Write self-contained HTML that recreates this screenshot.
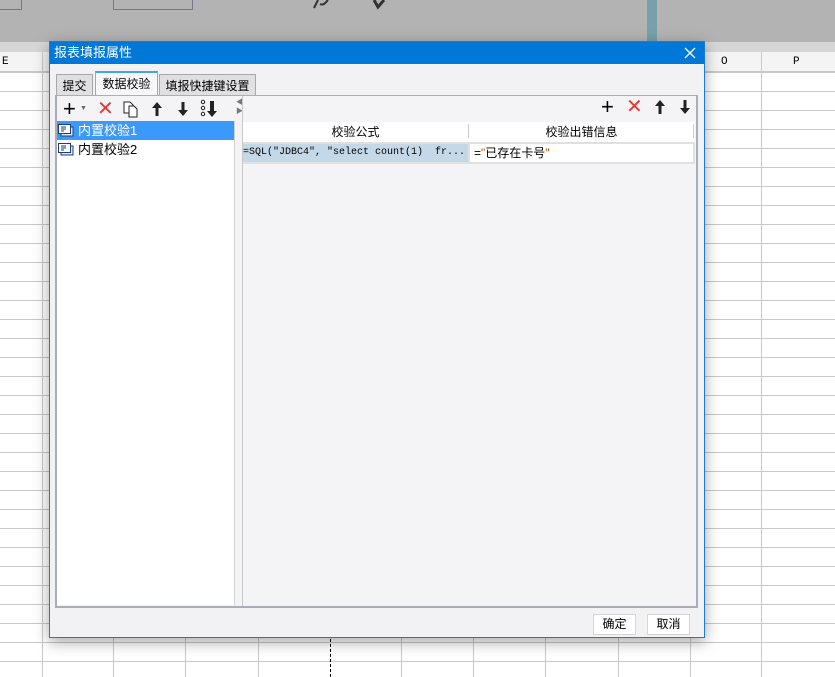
<!DOCTYPE html>
<html><head><meta charset="utf-8"><style>
*{margin:0;padding:0;box-sizing:border-box}
body{width:835px;height:677px;position:relative;overflow:hidden;background:#fff;font-family:"Liberation Sans","Noto Sans CJK SC",sans-serif;font-size:12px;color:#000}
.abs{position:absolute}
.grid{left:0;top:72px;width:835px;height:605px;
background-image:linear-gradient(#c8c8c8 1px,transparent 1px);background-size:100% 19px}
.vl{position:absolute;top:52px;width:1px;height:625px;background:#c8c8c8}
.mono{font-family:"Liberation Mono","Noto Sans CJK SC",monospace}
</style></head><body>
<div class="abs" style="left:0;top:0;width:835px;height:42px;background:#b3b3b3"></div>
<div class="abs" style="left:0;top:0;width:22px;height:10px;border:1px solid #6d7a90;border-top:none;border-left:none"></div>
<div class="abs" style="left:113px;top:0;width:80px;height:10px;border:1px solid #6d7a90;border-top:none"></div>
<div class="abs" style="left:647px;top:0;width:10px;height:42px;background:#76a1ab"></div>
<svg class="abs" style="left:310px;top:0" width="80" height="12"><path d="M4 8 L8 0 M10 4 C14 6 16 2 18 0" stroke="#333" stroke-width="2" fill="none"/><path d="M64 0 L68 7 L74 0" stroke="#333" stroke-width="3" fill="none"/></svg>
<div class="abs" style="left:0;top:42px;width:835px;height:10px;background:#d6d6d6"></div>
<div class="abs" style="left:0;top:52px;width:835px;height:20px;background:#f4f4f4;border-bottom:1px solid #c8c8c8"></div>
<div class="abs grid"></div>
<div class="vl" style="left:42px"></div><div class="vl" style="left:113px"></div><div class="vl" style="left:185px"></div><div class="vl" style="left:258px"></div>
<div class="abs" style="left:330px;top:52px;height:625px;border-left:1px dashed #000"></div>
<div class="vl" style="left:401px"></div><div class="vl" style="left:473px"></div><div class="vl" style="left:545px"></div><div class="vl" style="left:618px"></div><div class="vl" style="left:690px"></div><div class="vl" style="left:761px"></div>
<div class="abs mono" style="left:2px;top:56px;font-size:11px">E</div>
<div class="abs mono" style="left:721px;top:56px;font-size:11px">O</div>
<div class="abs mono" style="left:793px;top:56px;font-size:11px">P</div>

<div class="abs" style="left:49px;top:41px;width:656px;height:597px;background:#f2f2f4;border:1px solid #1a7ad4;box-shadow:0 4px 14px rgba(0,0,0,.35)">
 <div style="height:22px;background:#0078d7;color:#fff;font-size:13px;line-height:22px;padding-left:4px">报表填报属性</div>
 <svg class="abs" style="left:634px;top:5px" width="12" height="12"><path d="M1 1L11 11M11 1L1 11" stroke="#fff" stroke-width="1.3"/></svg>
 <div class="abs" style="left:6px;top:32px;width:37px;height:22px;background:#e0e0e2;border:1px solid #a8a8a8;border-bottom:none;font-size:12px;text-align:center;line-height:22px">提交</div>
 <div class="abs" style="left:45px;top:29px;width:63px;height:25px;background:#f7f7f9;border:1px solid #a8a8a8;border-top:2px solid #4aa0e8;border-bottom:none;font-size:12px;text-align:center;line-height:22px">数据校验</div>
 <div class="abs" style="left:109px;top:32px;width:97px;height:22px;background:#e0e0e2;border:1px solid #a8a8a8;border-bottom:none;font-size:12px;text-align:center;line-height:22px">填报快捷键设置</div>
 <div class="abs" style="left:5px;top:53px;width:643px;height:513px;border:2px solid #a9adb4;border-top:1px solid #a9adb4;background:#f4f4f6"></div>
 <div class="abs" style="left:13px;top:56px;font-size:22px;line-height:22px">+</div>
 <div class="abs" style="left:30px;top:63px;font-size:7px;color:#666">▼</div>
 <div class="abs" style="left:47px;top:56px;font-size:20px;line-height:22px;color:#e53935">✕</div>
 <svg class="abs" style="left:72px;top:58px" width="18" height="18"><path d="M2 2h6l3 3v8H2z" fill="#fff" stroke="#222"/><path d="M7 6h5l3 3v8H7z" fill="#fff" stroke="#222"/></svg>
 <svg class="abs" style="left:100px;top:58px" width="14" height="18"><path d="M7 2L2 8h3.5v8h3V8H12z" fill="#222"/></svg>
 <svg class="abs" style="left:126px;top:58px" width="14" height="18"><path d="M7 16L2 10h3.5V2h3v8H12z" fill="#222"/></svg>
 <svg class="abs" style="left:150px;top:57px" width="20" height="20"><circle cx="3" cy="3" r="1.7" fill="none" stroke="#222"/><circle cx="3" cy="9" r="1.7" fill="none" stroke="#222"/><circle cx="3" cy="15" r="1.7" fill="none" stroke="#222"/><path d="M12 18L7 12h3V2h4v10h3z" fill="#222"/></svg>
 <div class="abs" style="left:7px;top:79px;width:178px;height:484px;background:#fff;border-right:1px solid #d0d0d0"></div>
 <div class="abs" style="left:7px;top:79px;width:177px;height:19px;background:#3b99fc"></div>
 <svg class="abs" style="left:8px;top:82px" width="16" height="13"><rect x="3" y="3" width="12" height="9" fill="#dfe8f5" stroke="#1b3e7a"/><rect x="0.5" y="0.5" width="12" height="9" fill="#fff" stroke="#1b3e7a"/><path d="M3 3h5M3 5h5M3 7h3" stroke="#1b3e7a"/></svg>
 <div class="abs" style="left:28px;top:80px;font-size:13px;color:#fff;line-height:17px">内置校验1</div>
 <svg class="abs" style="left:8px;top:101px" width="16" height="13"><rect x="3" y="3" width="12" height="9" fill="#dfe8f5" stroke="#1b3e7a"/><rect x="0.5" y="0.5" width="12" height="9" fill="#fff" stroke="#1b3e7a"/><path d="M3 3h5M3 5h5M3 7h3" stroke="#1b3e7a"/></svg>
 <div class="abs" style="left:28px;top:99px;font-size:13px;line-height:17px">内置校验2</div>
 <div class="abs" style="left:186px;top:56px;font-size:7px;color:#777;line-height:9px">◀<br>▶</div>
 <div class="abs" style="left:192px;top:54px;width:1px;height:510px;background:#c8c8c8"></div>
 <div class="abs" style="left:551px;top:54px;font-size:22px;line-height:22px">+</div>
 <div class="abs" style="left:576px;top:54px;font-size:20px;line-height:22px;color:#e53935">✕</div>
 <svg class="abs" style="left:603px;top:56px" width="14" height="18"><path d="M7 2L2 8h3.5v8h3V8H12z" fill="#222"/></svg>
 <svg class="abs" style="left:628px;top:56px" width="14" height="18"><path d="M7 16L2 10h3.5V2h3v8H12z" fill="#222"/></svg>
 <div class="abs" style="left:193px;top:80px;width:452px;height:20px;background:#fff"></div>
 <div class="abs" style="left:193px;top:81px;width:225px;text-align:center;font-size:12px;line-height:18px">校验公式</div>
 <div class="abs" style="left:418px;top:82px;width:1px;height:14px;background:#ccc"></div>
 <div class="abs" style="left:419px;top:81px;width:225px;text-align:center;font-size:12px;line-height:18px">校验出错信息</div>
 <div class="abs" style="left:643px;top:82px;width:1px;height:14px;background:#ccc"></div>
 <div class="abs" style="left:193px;top:100px;width:452px;height:22px;background:#e0e0e2"></div>
 <div class="abs mono" style="left:193px;top:102px;width:225px;height:18px;background:#c5d8e8;font-size:10px;line-height:18px;white-space:pre;overflow:hidden">=SQL("JDBC4", "select count(1)  fr...</div>
 <div class="abs" style="left:420px;top:102px;width:223px;height:18px;background:#fff;font-size:12px;line-height:18px;padding-left:4px">=<span style="color:#c55a00">"</span>已存在卡号<span style="color:#c55a00">"</span></div>
 <div class="abs" style="left:543px;top:572px;width:43px;height:21px;background:#fff;border:1px solid #d6d6d6;text-align:center;line-height:19px;font-size:12px">确定</div>
 <div class="abs" style="left:597px;top:572px;width:43px;height:21px;background:#fff;border:1px solid #d6d6d6;text-align:center;line-height:19px;font-size:12px">取消</div>
</div>
</body></html>
